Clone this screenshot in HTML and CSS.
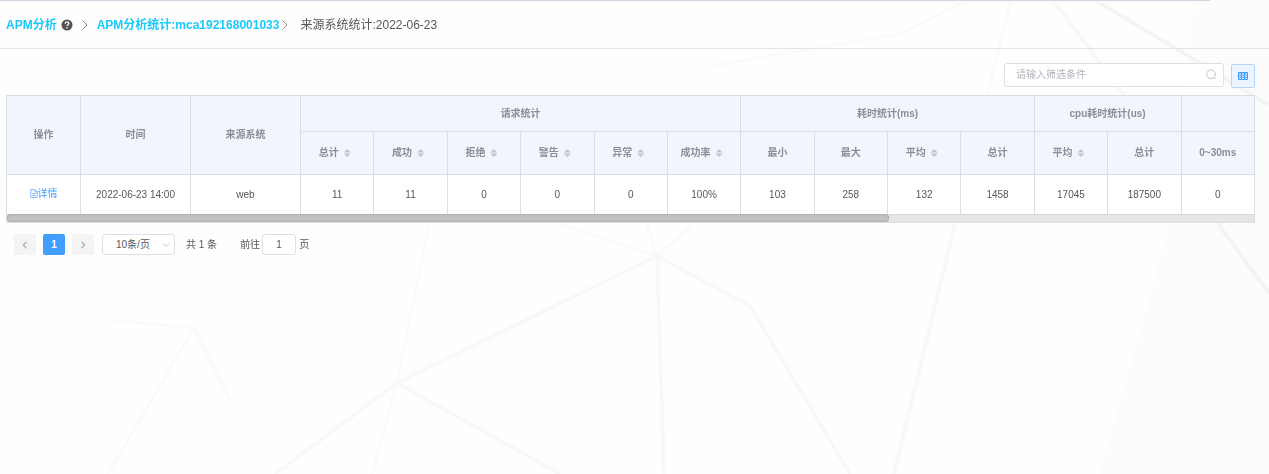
FILE: index.html
```html
<!DOCTYPE html>
<html lang="zh-CN">
<head>
<meta charset="utf-8">
<title>APM分析</title>
<link rel="stylesheet" href="styles.css">
</head>
<body>
<svg class="backdrop" viewBox="0 0 1269 474" preserveAspectRatio="none" aria-hidden="true">
  <path class="shade" d="M1195 0H1269V474H1100L1170 224Z"/>
  <g class="faint">
    <path d="M967 0L900 34L710 66M1011 0L987 95M657 256L558 224M657 256L647 224M657 256L694 224M397 383L429 224M194 328L108 474M194 328L230 400M194 328L109 320M397 383L372 474"/>
  </g>
  <g class="ray">
    <path d="M1053 0L1098 60L1128 100M657 256L397 383M657 256L664 474M657 256L750 306L850 474M397 383L275 474M397 383L560 474M955 224L894 474"/>
  </g>
  <path class="ray strong" d="M1095 0L1195 60L1269 105M1218 224L1269 293"/>
</svg>
<div class="progress"></div>
<header>
  <nav class="crumbs" aria-label="breadcrumb">
    <a href="#">APM分析</a>
    <svg class="help" viewBox="0 0 12 12"><circle cx="6" cy="6" r="5.5" fill="#555"/><path d="M4.2 4.8C4.2 2.4 7.8 2.4 7.8 4.6C7.8 5.7 6 5.8 6 7.1M6 8.2V9.4" fill="none" stroke="#fff" stroke-width="1.3"/></svg>
    <svg class="sep" viewBox="0 0 8 12"><path d="M1.5 1.5L6 6L1.5 10.5"/></svg>
    <a href="#">APM分析统计:mca192168001033</a>
    <svg class="sep second" viewBox="0 0 8 12"><path d="M1.5 1.5L6 6L1.5 10.5"/></svg>
    <span>来源系统统计:2022-06-23</span>
  </nav>
</header>
<main>
  <div class="toolbar">
    <div class="search">
      <input type="text" placeholder="请输入筛选条件" aria-label="请输入筛选条件">
      <svg viewBox="0 0 12 12"><circle cx="6" cy="5.2" r="4.3"/><path d="M8.4 8.8L10.6 9.6"/></svg>
    </div>
    <button class="columns" aria-label="列设置"><svg viewBox="0 0 10 8"><path d="M.5 .5H9.5V7.5H.5ZM.5 1H9.5M.5 3.2H9.5M.5 5.3H9.5M3.5 1V7.5M6.5 1V7.5"/></svg></button>
  </div>
  <div class="grid">
    <table>
      <colgroup><col class="c-op"><col class="c-wide"><col class="c-wide"><col span="13"></colgroup>
      <thead>
        <tr class="groups"><th rowspan="2">操作</th><th rowspan="2">时间</th><th rowspan="2">来源系统</th><th colspan="6">请求统计</th><th colspan="4">耗时统计(ms)</th><th colspan="2">cpu耗时统计(us)</th><th></th></tr>
        <tr class="fields">
          <th>总计<i class="sort"></i></th><th>成功<i class="sort"></i></th><th>拒绝<i class="sort"></i></th><th>警告<i class="sort"></i></th><th>异常<i class="sort"></i></th><th>成功率<i class="sort"></i></th>
          <th>最小</th><th>最大</th><th>平均<i class="sort"></i></th><th>总计</th><th>平均<i class="sort"></i></th><th>总计</th><th>0~30ms</th>
        </tr>
      </thead>
      <tbody>
        <tr><td><a class="detail" href="#"><svg viewBox="0 0 8 9"><path d="M.8 .6H5L7.2 2.8V8.4H.8ZM5 .6V2.8H7.2M2.3 4.5H5.7M2.3 6.4H5.7"/></svg>详情</a></td><td>2022-06-23 14:00</td><td>web</td><td>11</td><td>11</td><td>0</td><td>0</td><td>0</td><td>100%</td><td>103</td><td>258</td><td>132</td><td>1458</td><td>17045</td><td>187500</td><td>0</td></tr>
      </tbody>
    </table>
    <div class="track"><div class="thumb"></div></div>
  </div>
  <div class="pager">
    <button class="page" disabled aria-label="上一页"><svg viewBox="0 0 8 8"><path d="M5.5 .8L2.3 4L5.5 7.2"/></svg></button>
    <button class="page current">1</button>
    <button class="page" disabled aria-label="下一页"><svg viewBox="0 0 8 8"><path d="M2.5 .8L5.7 4L2.5 7.2"/></svg></button>
    <div class="size">
      <select aria-label="每页条数"><option>10条/页</option></select>
      <svg viewBox="0 0 8 8"><path d="M1 2.5L4 5.5L7 2.5"/></svg>
    </div>
    <span class="total">共 1 条</span>
    <label class="jump">前往<input type="text" value="1">页</label>
  </div>
</main>
</body>
</html>
```
FILE: styles.css
```css
* { box-sizing: border-box; }
body {
  margin: 0;
  min-height: 100vh;
  background: #fefefe;
  color: #55575b;
  font: 10px/14px "Liberation Sans", "Noto Sans CJK SC", sans-serif;
}
button, input, select { font: inherit; color: inherit; margin: 0; padding: 0; }
a { text-decoration: none; }
svg { flex: none; fill: none; }

.backdrop { position: fixed; inset: 0; width: 100%; height: 100%; z-index: -1; }
.backdrop .shade { fill: #fcfcfc; }
.faint { stroke: #fafafa; stroke-width: 3; }
.ray { stroke: #f8f8f8; stroke-width: 4; }
.strong { stroke: #f4f4f4; }

.progress { height: 1px; margin-right: 59px; background: #cfd5e3; }
header { height: 48px; border-bottom: 1px solid #e0e4ef; display: flex; align-items: center; padding: 0 6px; }
.crumbs { display: flex; align-items: center; font-size: 12px; line-height: 18px; }
.crumbs a { color: #1cc9fb; font-weight: bold; }
.help { width: 12px; height: 12px; margin-left: 4px; }
.sep { width: 8px; height: 12px; margin: 0 8px; stroke: #808388; }
.sep.second { margin: 0 11px 0 2px; stroke: #9a8f88; }

main { padding: 14px 14px 0 6px; }
.toolbar { display: flex; justify-content: flex-end; align-items: flex-end; gap: 7px; height: 25px; }
.search { display: flex; align-items: center; align-self: flex-start; width: 220px; height: 24px; padding: 0 6px 0 11px; background: #fff; border: 1px solid #dcdfe6; border-radius: 3px; }
.search input { flex: 1; min-width: 0; border: 0; outline: 0; background: none; }
.search input::placeholder { color: #b0b4bd; }
.search svg { width: 12px; height: 12px; stroke: #c0c4cc; }
.columns { display: grid; place-items: center; width: 24px; height: 24px; border: 1px solid #b3d8ff; border-radius: 2px; background: #ecf5ff; }
.columns svg { width: 10px; height: 8px; stroke: #409eff; }

.grid { margin-top: 7px; border: 1px solid #d6dee6; border-width: 1px 0 1px 1px; background: #fff; }
table { width: 100%; table-layout: fixed; border-collapse: separate; border-spacing: 0; text-align: center; }
.c-op { width: 74px; }
.c-wide { width: 110px; }
th, td { padding: 0; border-right: 1px solid #d6dee6; white-space: nowrap; }
th { background: #f2f6fc; color: #8b8e94; border-bottom: 1px solid #d6dee6; }
.groups { height: 36px; }
.fields { height: 43px; }
tbody tr { height: 39px; }
.sort { display: inline-block; width: 7px; height: 8px; margin: 0 5px; vertical-align: -1px; background: #c0c4cc; clip-path: polygon(50% 0, 100% 44%, 0 44%, 0 56%, 100% 56%, 50% 100%, 0 56%, 0 44%); }
.detail { display: inline-flex; align-items: center; color: #409eff; }
.detail svg { width: 8px; height: 9px; stroke: #80b8ff; }
.track { height: 8px; background: #e6e6e6; border-right: 1px solid #d6dee6; box-shadow: inset 0 1px 1px #d8d8d8; }
.thumb { width: 70.7%; height: 8px; border-radius: 4px; background: #c1c1c1; box-shadow: inset 0 0 2px #888; }

.pager { display: flex; align-items: center; padding: 11px 8px; }
.page { display: grid; place-items: center; width: 22px; height: 21px; margin-right: 7px; border: 0; border-radius: 2px; background: #f4f4f5; font-weight: bold; }
.page svg { width: 8px; height: 8px; stroke: #b0b4bd; stroke-width: 1.4; }
.page.current { background: #409eff; color: #fff; }
.size { display: grid; align-items: center; margin-left: 1px; }
.size select, .size svg { grid-area: 1 / 1; }
.size select { appearance: none; width: 73px; height: 21px; padding: 0 13px; border: 1px solid #dcdfe6; border-radius: 3px; background: #fff; }
.size svg { justify-self: end; width: 8px; height: 8px; margin-right: 5px; stroke: #c0c4cc; pointer-events: none; }
.total { margin: 0 23px 0 11px; }
.jump { display: flex; align-items: center; }
.jump input { width: 34px; height: 21px; margin: 0 3px 0 2px; text-align: center; border: 1px solid #dcdfe6; border-radius: 3px; background: #fff; }
```
